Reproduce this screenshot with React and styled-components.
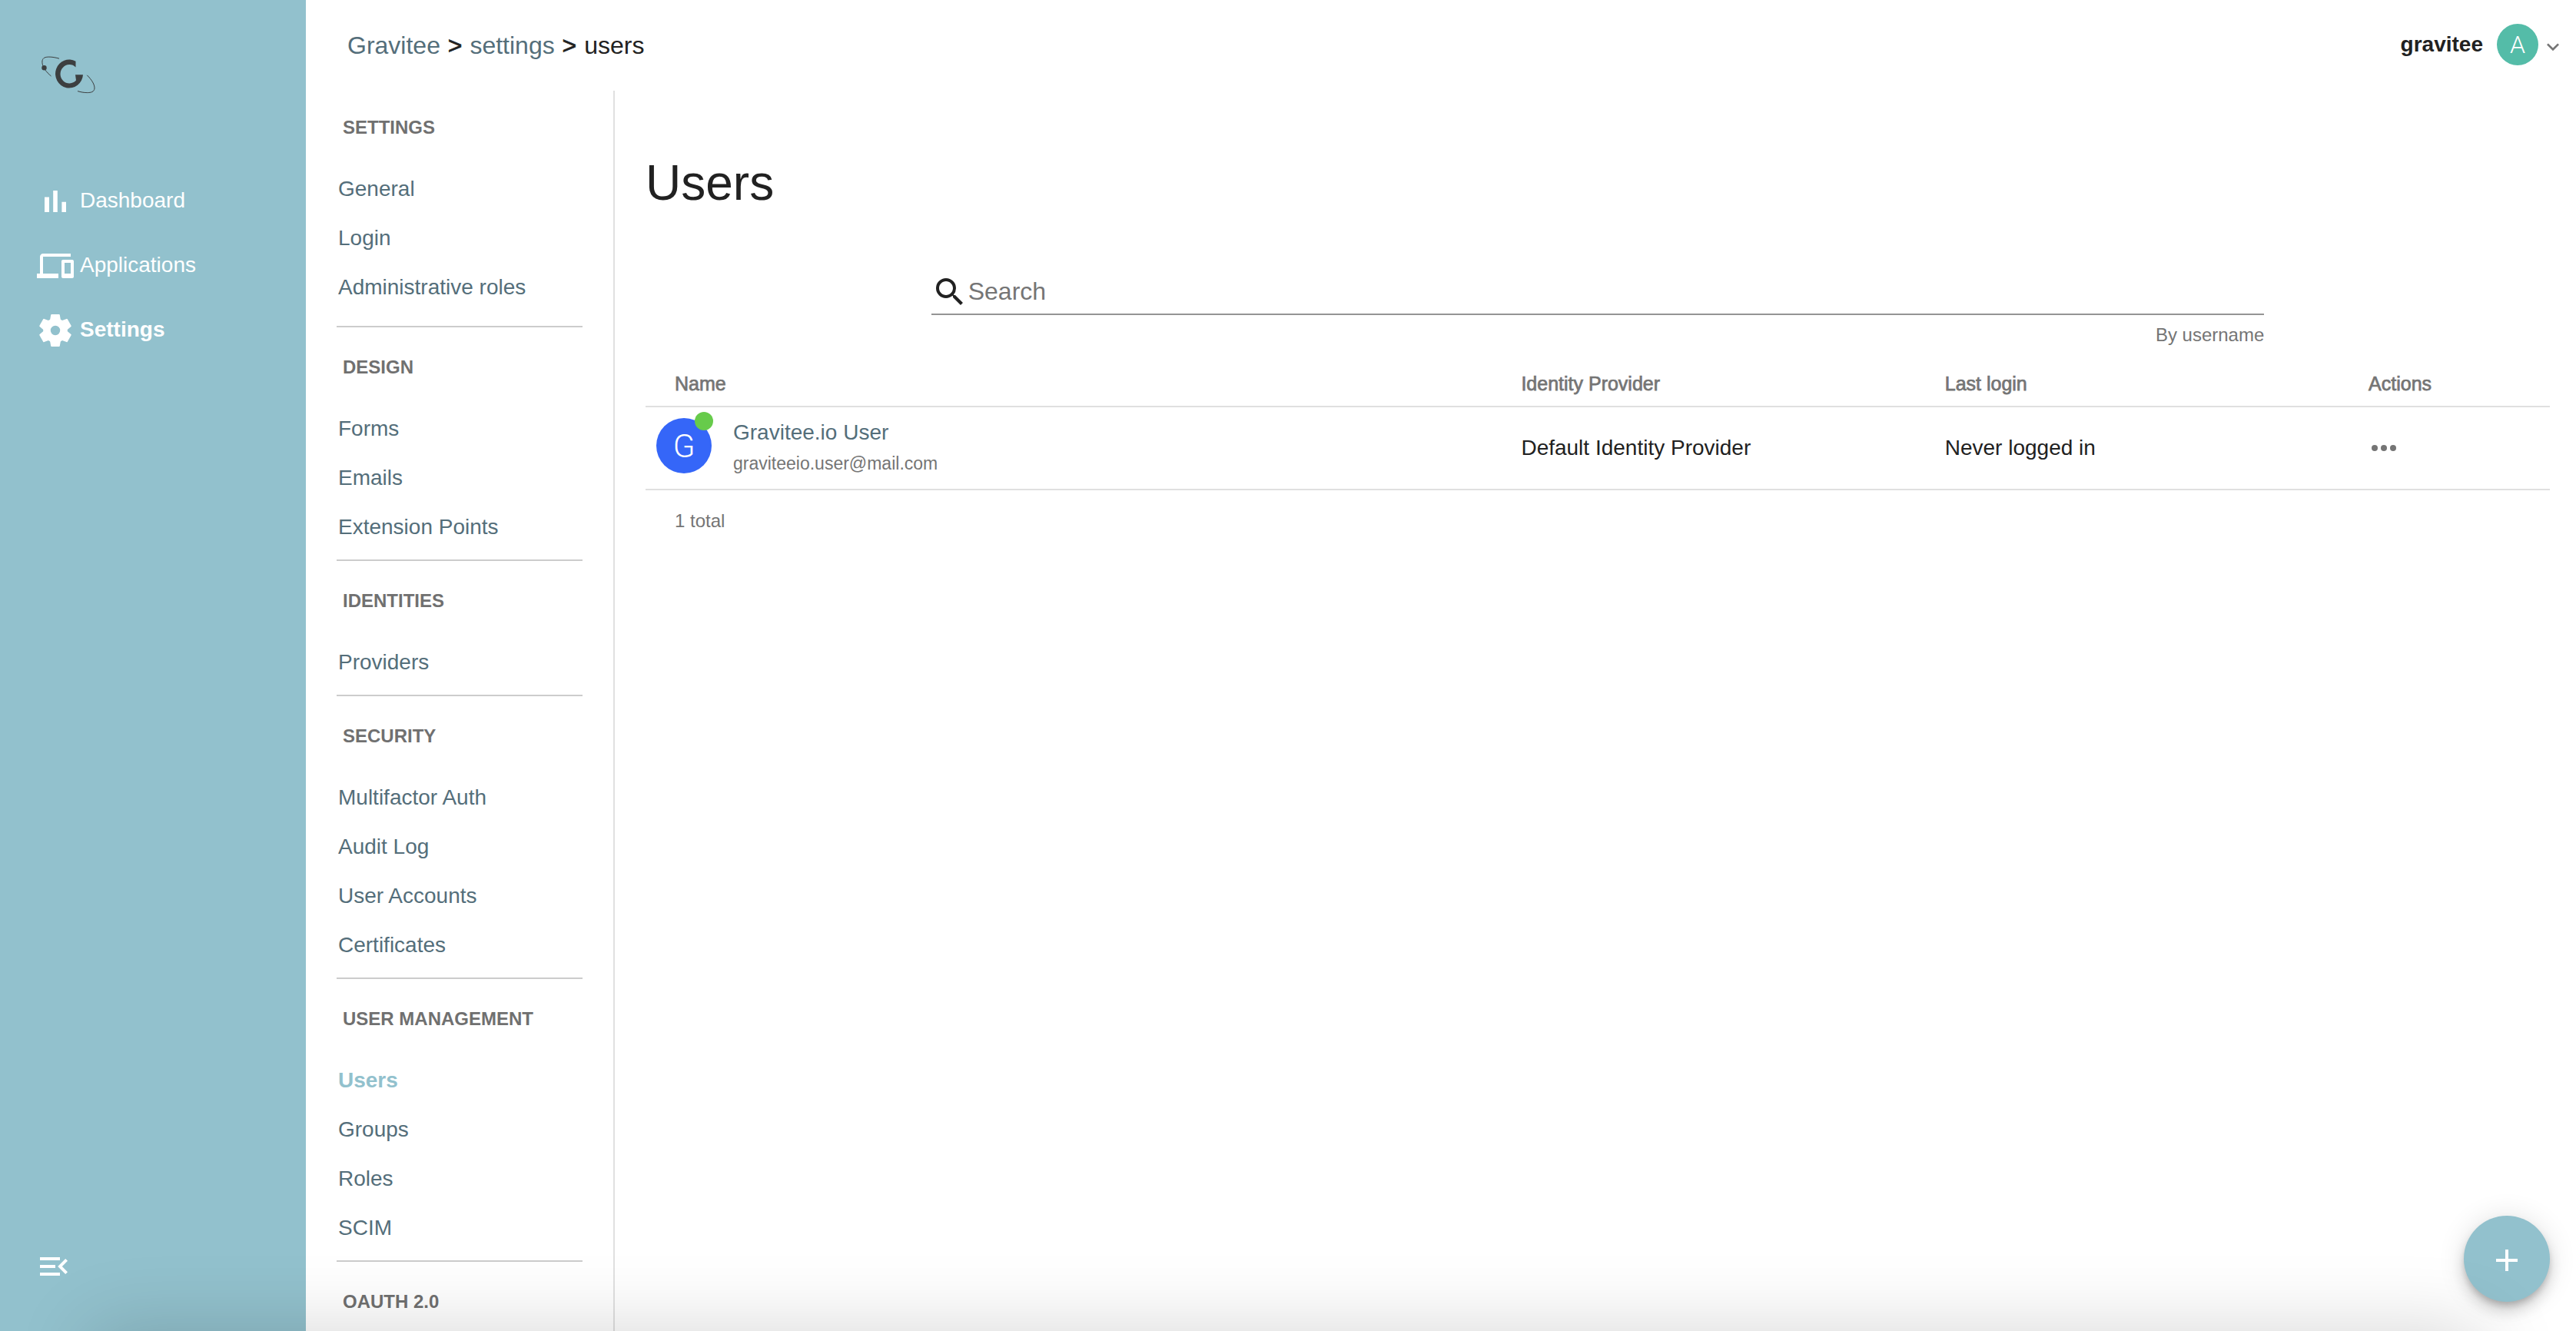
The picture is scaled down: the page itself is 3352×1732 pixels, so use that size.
import React from "react";
import styled, { createGlobalStyle, css } from "styled-components";
import { MdAdd, MdDevices, MdExpandMore, MdMenuOpen, MdSearch } from "react-icons/md";

const color = {
  brand: "#92c1cd",
  link: "#546e7a",
  text: "#212121",
  muted: "#757575",
  heading: "#707070",
  line: "#e0e0e0",
  divider: "#cccccc",
};

const GlobalStyle = createGlobalStyle`
  *, *::before, *::after { box-sizing: border-box; }
  body {
    margin: 0;
    background: #fff;
    color: ${color.text};
    font-family: "Liberation Sans", Arial, sans-serif;
    font-size: 28px;
  }
  a { color: inherit; text-decoration: none; }
  button { border: 0; padding: 0; background: none; font: inherit; color: inherit; cursor: pointer; }
  ul { list-style: none; margin: 0; padding: 0; }
  svg { display: block; flex: none; }
`;

const Shell = styled.div`
  display: flex;
  height: 100vh;
  overflow: hidden;
`;

const Sidebar = styled.aside`
  display: flex;
  flex-direction: column;
  flex: none;
  width: 398px;
  padding: 72px 46px 60px;
  background: ${color.brand};
  color: #fff;
`;

const LogoLink = styled.a`
  align-self: flex-start;
  margin: 0 0 98px 8px;
`;

const MainMenu = styled.nav`
  flex: 1;
`;

const MenuLink = styled.a`
  display: flex;
  align-items: center;
  gap: 8px;
  height: 84px;
  padding-left: 2px;
  font-weight: ${(p) => (p.$active ? 700 : 400)};
`;

const MenuLabel = styled.span`
  padding-bottom: 3px;
`;

const CollapseButton = styled.button`
  align-self: flex-start;
`;

const Page = styled.div`
  display: flex;
  flex-direction: column;
  flex: 1;
  min-width: 0;
`;

const Header = styled.header`
  display: flex;
  align-items: center;
  justify-content: space-between;
  flex: none;
  height: 118px;
  padding: 0 14px 0 54px;
`;

const Breadcrumbs = styled.nav`
  font-size: 32px;
  white-space: pre;
`;

const Crumb = styled.a`
  color: ${color.link};
`;

const Separator = styled.span`
  margin: 0 1px;
  -webkit-text-stroke: 0.02em currentColor;
`;

const Account = styled.button`
  display: flex;
  align-items: center;
  padding-bottom: 2px;
  font-weight: 700;
`;

const Avatar = styled.span`
  display: flex;
  align-items: center;
  justify-content: center;
  width: ${(p) => p.$size}px;
  height: ${(p) => p.$size}px;
  border-radius: 50%;
  background: ${(p) => p.$color};
  color: #fff;
  font-family: Roboto, sans-serif;
  font-weight: 300;
  font-size: ${(p) => p.$font}px;
`;

const AccountName = styled.span`
  margin-right: 18px;
`;

const AccountArrow = styled.span`
  padding: 6px 0 0 3px;
  color: ${color.muted};
`;

const Body = styled.div`
  display: flex;
  flex: 1;
  min-height: 0;
`;

const SettingsNav = styled.nav`
  flex: none;
  width: 402px;
  padding: 0 40px;
  border-right: 2px solid ${color.line};
  overflow: hidden;
`;

const Section = styled.section`
  padding-bottom: ${(p) => (p.$roomy ? 18 : 10)}px;
  margin-bottom: 4px;
  border-bottom: 2px solid ${color.divider};
`;

const SectionTitle = styled.h2`
  margin: 0;
  padding-left: 8px;
  line-height: 96px;
  font-size: 24px;
  font-weight: 700;
  color: ${color.heading};
  text-transform: uppercase;
`;

const SectionLink = styled.a`
  display: block;
  padding-left: 2px;
  line-height: 64px;
  color: ${color.link};
  ${(p) =>
    p.$active &&
    css`
      color: ${color.brand};
      font-weight: 700;
    `}
`;

const Main = styled.main`
  flex: 1;
  min-width: 0;
  padding: 80px 34px 0 40px;
`;

const Title = styled.h1`
  margin: 0 0 74px;
  font-size: 64px;
  line-height: 80px;
  font-weight: 400;
`;

const Search = styled.div`
  width: 70%;
  margin: 0 auto 8px;
`;

const SearchField = styled.label`
  display: flex;
  align-items: center;
  height: 58px;
  border-bottom: 2px solid #949494;
`;

const SearchInput = styled.input`
  flex: 1;
  min-width: 0;
  padding: 0 0 2px;
  border: 0;
  outline: 0;
  background: none;
  font: inherit;
  font-size: 32px;
  &::placeholder {
    color: ${color.muted};
    opacity: 1;
  }
`;

const Hint = styled.div`
  font-size: 24px;
  line-height: 52px;
  text-align: right;
  color: ${color.muted};
`;

const Table = styled.table`
  width: 100%;
  table-layout: fixed;
  border-collapse: separate;
  border-spacing: 0;
  text-align: left;
`;

const Col = styled.col`
  width: ${(p) => p.$width};
`;

const HeadCell = styled.th`
  height: 60px;
  padding: 0 0 0 ${(p) => (p.$first ? 38 : 2)}px;
  border-bottom: 2px solid ${color.line};
  color: ${color.muted};
  font-size: 25px;
  font-weight: 400;
  -webkit-text-stroke: 0.03em currentColor;
`;

const Cell = styled.td`
  height: 108px;
  padding: 0 0 0 2px;
  border-bottom: 2px solid ${color.line};
`;

const User = styled.div`
  display: flex;
  align-items: center;
  gap: 28px;
  padding-left: 12px;
`;

const AvatarWrap = styled.div`
  position: relative;
  margin-bottom: 6px;
`;

const Status = styled.span`
  position: absolute;
  top: -8px;
  right: -2px;
  width: 24px;
  height: 24px;
  border-radius: 50%;
  background: #67cb4b;
`;

const UserName = styled.a`
  display: block;
  line-height: 40px;
  color: ${color.link};
`;

const Email = styled.div`
  font-size: 23px;
  line-height: 40px;
  color: ${color.muted};
`;

const RowMenu = styled.button`
  display: block;
  color: ${color.muted};
`;

const Total = styled.div`
  padding-left: 38px;
  font-size: 24px;
  line-height: 80px;
  color: ${color.muted};
`;

const AddButton = styled.button`
  position: fixed;
  right: 34px;
  bottom: 38px;
  display: flex;
  align-items: center;
  justify-content: center;
  width: 112px;
  height: 112px;
  padding-top: 4px;
  border-radius: 50%;
  background: ${color.brand};
  color: #fff;
  box-shadow:
    0 6px 10px -2px rgba(0, 0, 0, 0.2),
    0 12px 20px 0 rgba(0, 0, 0, 0.14),
    0 2px 36px 0 rgba(0, 0, 0, 0.12);
`;

const BottomShade = styled.div`
  position: fixed;
  top: 100%;
  left: 120px;
  right: 120px;
  height: 200px;
  pointer-events: none;
  box-shadow: 0 0 100px rgba(0, 0, 0, 0.17);
`;

function Logo() {
  return (
    <svg width="70" height="50" viewBox="54 72 70 50" fill="none" stroke="#3c3f40">
      <path
        d="M98.5 79.7A18 18.5 0 1 0 108 97.2H98L99 104.6A11.8 12.2 0 1 1 98.5 87.5Z"
        fill="#3c3f40"
        stroke="none"
      />
      <circle cx="57.5" cy="88.3" r="3.2" fill="#3c3f40" stroke="none" />
      <path d="M77 76.2C69 73.8 60 73.2 57 75.6C54.4 77.8 54.4 81.5 56 86M58.5 90.5C60.5 93.5 63.5 96.5 66.5 99" />
      <path d="M113.3 97.8C119.5 104 123.2 110 123 115C122.5 119.6 118.5 120.6 113.5 120.6C109 120.6 105 119.8 101 118.6" />
    </svg>
  );
}

function BarsIcon({ size }) {
  return (
    <svg width={size} height={size} viewBox="0 0 24 24" fill="currentColor">
      <path d="M5 9.2h3V19H5zM10.6 5h2.8v14h-2.8zM16.2 12.4h2.8V19h-2.8z" />
    </svg>
  );
}

function GearIcon({ size }) {
  return (
    <svg
      width={size}
      height={size}
      viewBox="-24 -24 48 48"
      fill="currentColor"
      stroke="currentColor"
      strokeWidth="2"
      strokeLinejoin="round"
    >
      <circle r="11" fill="none" strokeWidth="9.6" />
      {[0, 60, 120, 180, 240, 300].map((angle) => (
        <path key={angle} d="M-4.8 -20H4.8L6.2 -12H-6.2Z" transform={`rotate(${angle})`} />
      ))}
    </svg>
  );
}

function Dots() {
  return (
    <svg width="40" height="48" viewBox="2 0 20 24" fill="currentColor">
      <circle cx="6" cy="12" r="2" />
      <circle cx="12" cy="12" r="2" />
      <circle cx="18" cy="12" r="2" />
    </svg>
  );
}

const menu = [
  { label: "Dashboard", Icon: BarsIcon },
  { label: "Applications", Icon: MdDevices },
  { label: "Settings", Icon: GearIcon, active: true },
];

const sections = [
  { title: "Settings", items: ["General", "Login", "Administrative roles"], roomy: true },
  { title: "Design", items: ["Forms", "Emails", "Extension Points"] },
  { title: "Identities", items: ["Providers"] },
  { title: "Security", items: ["Multifactor Auth", "Audit Log", "User Accounts", "Certificates"] },
  { title: "User management", items: ["Users", "Groups", "Roles", "SCIM"] },
  { title: "OAuth 2.0", items: [] },
];

const columns = [
  { label: "Name", width: "45.9%" },
  { label: "Identity Provider", width: "22.25%" },
  { label: "Last login", width: "22.25%" },
  { label: "Actions", width: "9.6%" },
];

const users = [
  {
    name: "Gravitee.io User",
    email: "graviteeio.user@mail.com",
    provider: "Default Identity Provider",
    lastLogin: "Never logged in",
  },
];

export default function App() {
  return (
    <>
      <GlobalStyle />
      <Shell>
        <Sidebar>
          <LogoLink href="#" aria-label="Gravitee">
            <Logo />
          </LogoLink>
          <MainMenu>
            {menu.map(({ label, Icon, active }) => (
              <MenuLink key={label} href="#" $active={active}>
                <Icon size={48} />
                <MenuLabel>{label}</MenuLabel>
              </MenuLink>
            ))}
          </MainMenu>
          <CollapseButton type="button" aria-label="Collapse menu">
            <MdMenuOpen size={48} />
          </CollapseButton>
        </Sidebar>
        <Page>
          <Header>
            <Breadcrumbs>
              <Crumb href="#">Gravitee</Crumb>
              <Separator> &gt; </Separator>
              <Crumb href="#">settings</Crumb>
              <Separator> &gt; </Separator>
              <span>users</span>
            </Breadcrumbs>
            <Account type="button">
              <AccountName>gravitee</AccountName>
              <Avatar $size={54} $font={32} $color="#54bca8">A</Avatar>
              <AccountArrow>
                <MdExpandMore size={32} />
              </AccountArrow>
            </Account>
          </Header>
          <Body>
            <SettingsNav>
              {sections.map((section) => (
                <Section key={section.title} $roomy={section.roomy}>
                  <SectionTitle>{section.title}</SectionTitle>
                  <ul>
                    {section.items.map((item) => (
                      <li key={item}>
                        <SectionLink href="#" $active={item === "Users"}>
                          {item}
                        </SectionLink>
                      </li>
                    ))}
                  </ul>
                </Section>
              ))}
            </SettingsNav>
            <Main>
              <Title>Users</Title>
              <Search>
                <SearchField>
                  <MdSearch size={48} />
                  <SearchInput type="text" placeholder="Search" aria-label="Search" />
                </SearchField>
                <Hint>By username</Hint>
              </Search>
              <Table>
                <colgroup>
                  {columns.map((c) => (
                    <Col key={c.label} $width={c.width} />
                  ))}
                </colgroup>
                <thead>
                  <tr>
                    {columns.map((c, i) => (
                      <HeadCell key={c.label} $first={i === 0}>
                        {c.label}
                      </HeadCell>
                    ))}
                  </tr>
                </thead>
                <tbody>
                  {users.map((u) => (
                    <tr key={u.email}>
                      <Cell>
                        <User>
                          <AvatarWrap>
                            <Avatar $size={72} $font={42} $color="#3566f8">G</Avatar>
                            <Status />
                          </AvatarWrap>
                          <div>
                            <UserName href="#">{u.name}</UserName>
                            <Email>{u.email}</Email>
                          </div>
                        </User>
                      </Cell>
                      <Cell>{u.provider}</Cell>
                      <Cell>{u.lastLogin}</Cell>
                      <Cell>
                        <RowMenu type="button" aria-label="User actions">
                          <Dots />
                        </RowMenu>
                      </Cell>
                    </tr>
                  ))}
                </tbody>
              </Table>
              <Total>1 total</Total>
            </Main>
          </Body>
        </Page>
      </Shell>
      <AddButton type="button" aria-label="Add user">
        <MdAdd size={48} />
      </AddButton>
      <BottomShade />
    </>
  );
}
